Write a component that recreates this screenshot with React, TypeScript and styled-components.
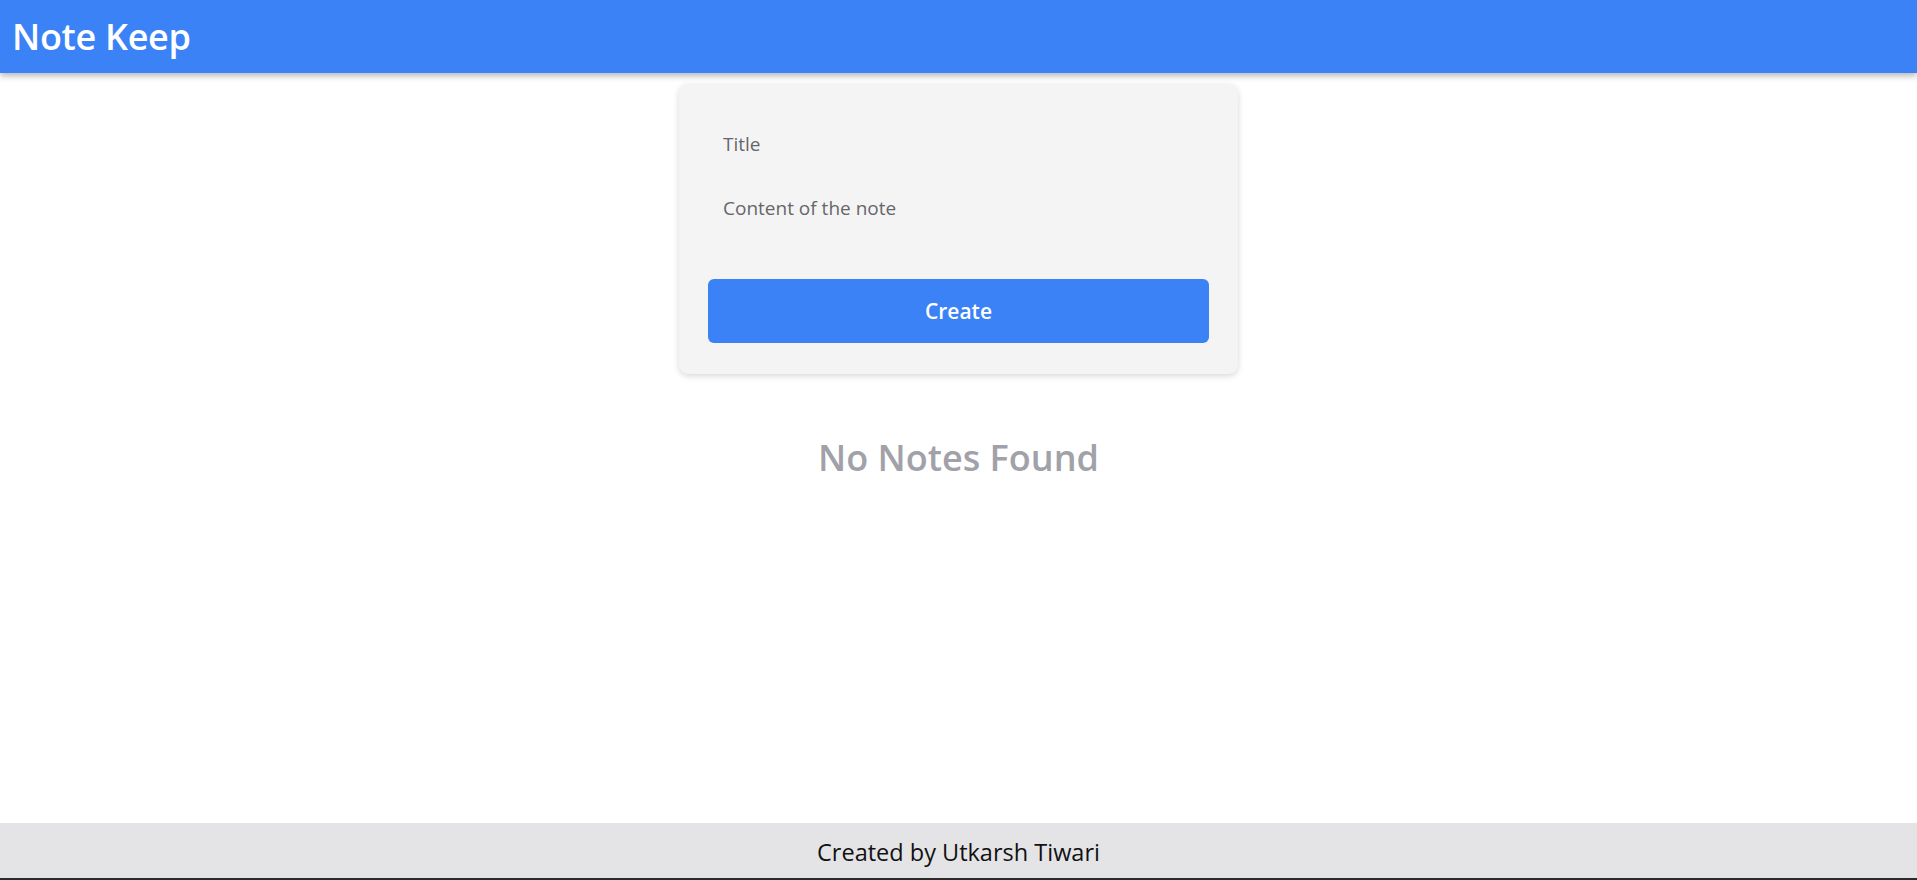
import React from "react";
import styled, { createGlobalStyle } from "styled-components";

const GlobalStyle = createGlobalStyle`
  * {
    box-sizing: border-box;
  }

  body {
    margin: 0;
    font-family: "Open Sans", "Noto Sans", sans-serif;
    background-color: #ffffff;
  }
`;

const Page = styled.div`
  display: flex;
  flex-direction: column;
  height: 100vh;
`;

const Header = styled.header`
  display: flex;
  align-items: center;
  height: 73px;
  padding: 0 12px;
  background-color: #3b82f6;
  box-shadow: 0 3px 6px rgba(0, 0, 0, 0.28);
  position: relative;
  z-index: 1;
`;

const Brand = styled.h1`
  margin: 0;
  color: #ffffff;
  font-size: 36px;
  font-weight: 600;
  letter-spacing: -0.3px;
`;

const Main = styled.main`
  flex: 1;
  display: flex;
  flex-direction: column;
  align-items: center;
  padding-top: 11px;
`;

const Card = styled.form`
  display: flex;
  flex-direction: column;
  width: 559px;
  padding: 30px 29px 31px;
  background-color: #f4f4f4;
  border-radius: 9px;
  box-shadow: 0 2px 6px rgba(0, 0, 0, 0.16);
`;

const Field = styled.input`
  height: 60px;
  padding: 0 15px;
  border: none;
  outline: none;
  background: transparent;
  font-family: inherit;
  font-size: 19px;
  color: #3f3f46;

  &::placeholder {
    color: #66666b;
  }
`;

const Area = styled.textarea`
  height: 93px;
  padding: 19px 15px 0;
  border: none;
  outline: none;
  resize: none;
  background: transparent;
  font-family: inherit;
  font-size: 19px;
  line-height: 30px;
  color: #3f3f46;

  &::placeholder {
    color: #66666b;
  }
`;

const CreateButton = styled.button`
  height: 64px;
  margin-top: 12px;
  border: none;
  border-radius: 6px;
  background-color: #3b82f6;
  color: #ffffff;
  font-family: inherit;
  font-size: 21px;
  font-weight: 600;
  cursor: pointer;
`;

const Empty = styled.h2`
  margin: 61px 0 0;
  color: #a1a1aa;
  font-size: 36px;
  font-weight: 600;
  line-height: 46px;
`;

const Footer = styled.footer`
  display: flex;
  align-items: center;
  justify-content: center;
  height: 57px;
  padding-top: 2px;
  background-color: #e4e4e7;
  border-bottom: 2px solid #2b2a2a;
  color: #111111;
  font-size: 23.5px;
`;

function App() {
  return (
    <>
      <GlobalStyle />
      <Page>
        <Header>
          <Brand>Note Keep</Brand>
        </Header>
        <Main>
          <Card onSubmit={(e) => e.preventDefault()}>
            <Field type="text" placeholder="Title" />
            <Area placeholder="Content of the note" />
            <CreateButton type="submit">Create</CreateButton>
          </Card>
          <Empty>No Notes Found</Empty>
        </Main>
        <Footer>Created by Utkarsh Tiwari</Footer>
      </Page>
    </>
  );
}

export default App;
